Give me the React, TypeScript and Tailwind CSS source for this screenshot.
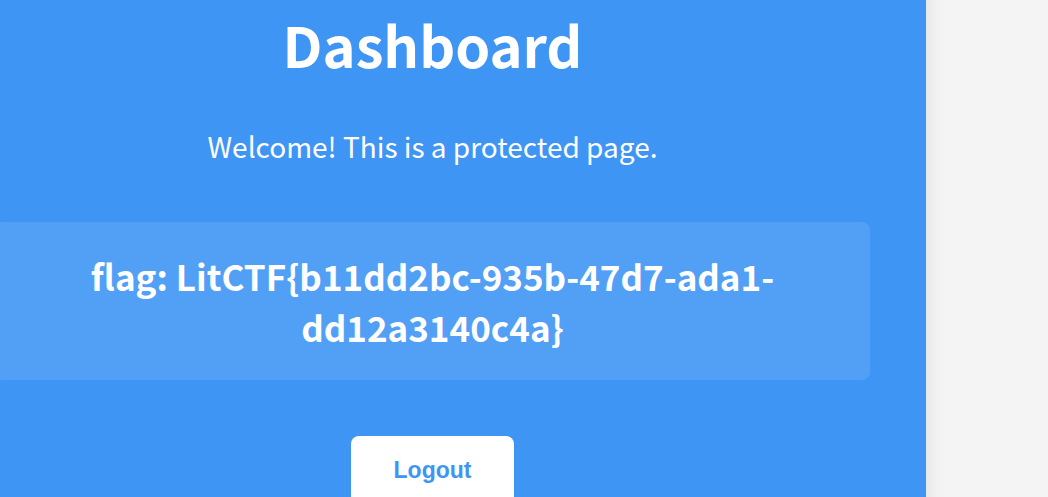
export default function App() {
  return (
    <div className="flex h-screen overflow-hidden bg-[#f4f4f4] font-['Noto_Sans_CJK_SC','Noto_Sans',sans-serif]">
      <main className="-mt-14 -ml-[61px] mr-[122px] flex flex-1 flex-col items-center self-start bg-[#3f95f4] px-14 pt-14 pb-16 text-white shadow-[0_0_18px_rgba(0,0,0,0.1)]">
        <h1 className="mt-[5px] text-[56px] leading-[78px] font-bold">Dashboard</h1>
        <p className="mt-[42px] text-[28px] leading-[42px]">Welcome! This is a protected page.</p>
        <section className="mt-[55px] w-full rounded-lg bg-white/10 px-14 py-7 text-center text-[35px] leading-[51px] font-bold">
          flag: LitCTF&#123;b11dd2bc-935b-47d7-ada1-dd12a3140c4a&#125;
        </section>
        <button type="button" className="mt-14 rounded-lg bg-white px-[43px] py-5 font-['Liberation_Sans',Arial,sans-serif] text-[23px] leading-7 font-bold text-[#3f95f4]">
          Logout
        </button>
      </main>
    </div>
  );
}
